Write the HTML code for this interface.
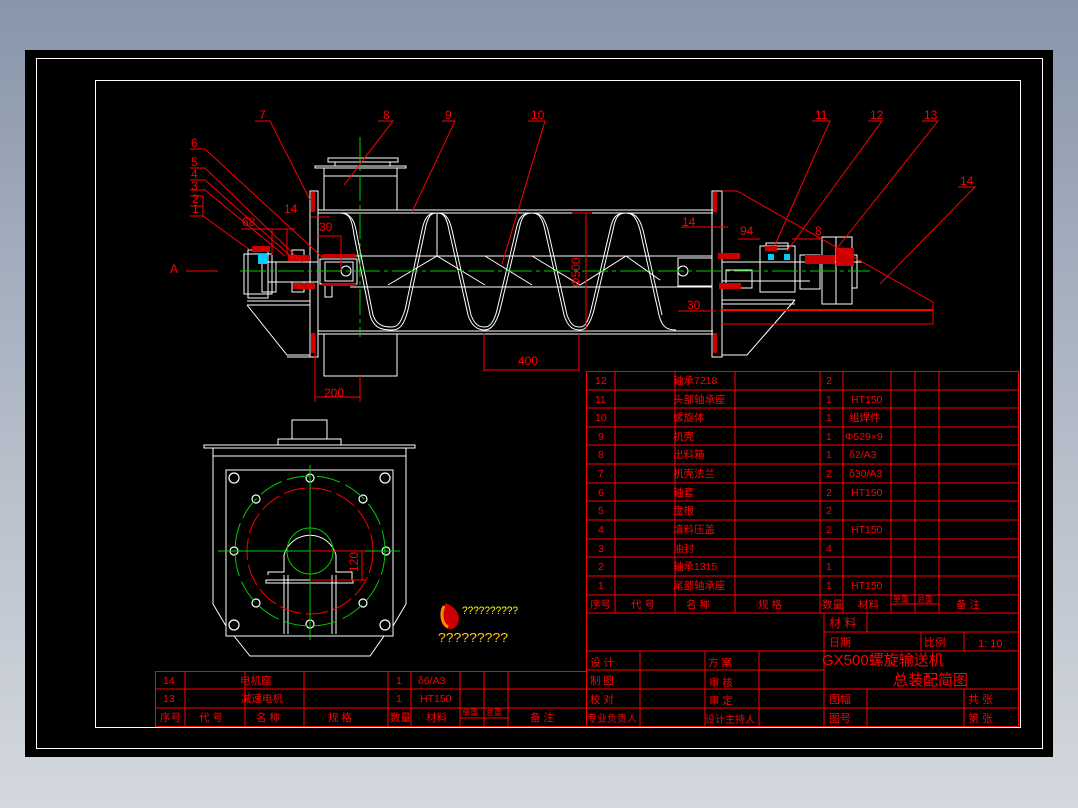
<!DOCTYPE html>
<html><head><meta charset="utf-8"><style>
html,body{margin:0;padding:0;width:1078px;height:808px;overflow:hidden;background:linear-gradient(#8896aa,#b9c0cc 60%,#d4d8de);}
svg{position:absolute;left:0;top:0}
text{font-family:"Liberation Sans","Noto Sans CJK SC",sans-serif;fill:#f00;}
</style></head><body>
<svg width="1078" height="808" viewBox="0 0 1078 808" xmlns="http://www.w3.org/2000/svg">
<rect x="25" y="50" width="1028" height="707" fill="#000"/>
<rect x="36.5" y="58.5" width="1006" height="690" fill="none" stroke="#fff" stroke-width="1"/>
<rect x="95.5" y="80.5" width="925" height="647" fill="none" stroke="#fff" stroke-width="1"/>

<!-- MAIN VIEW -->
<g fill="none" stroke="#fff" stroke-width="1">
 <line x1="318" y1="210" x2="713" y2="210"/><line x1="318" y1="213" x2="713" y2="213"/>
 <line x1="318" y1="331" x2="713" y2="331"/><line x1="318" y1="334" x2="713" y2="334"/>
 <rect x="310" y="191" width="8" height="166"/>
 <rect x="315" y="166" width="91" height="2"/>
 <rect x="324" y="168" width="73" height="42"/>
 <line x1="324" y1="176" x2="397" y2="176"/>
 <rect x="328" y="158" width="70" height="4"/>
 <line x1="335" y1="162" x2="335" y2="166"/><line x1="390" y1="162" x2="390" y2="166"/>
 <rect x="324" y="334" width="73" height="42"/>
 <line x1="350" y1="256" x2="712" y2="256"/><line x1="350" y1="287" x2="712" y2="287"/>
 <line x1="268" y1="262" x2="318" y2="262"/><line x1="268" y1="282" x2="318" y2="282"/>
 <rect x="320" y="259" width="37" height="25"/>
 <rect x="325" y="262" width="28" height="19"/>
 <circle cx="346" cy="271" r="5"/>
 <rect x="244" y="254" width="28" height="40"/>
 <rect x="248" y="250" width="20" height="48"/>
 <rect x="262" y="262" width="14" height="30"/>
 <rect x="292" y="250" width="12" height="10"/>
 <rect x="292" y="282" width="12" height="10"/>
 <line x1="247" y1="301" x2="310" y2="301"/><line x1="247" y1="305" x2="310" y2="305"/>
 <path d="M247 305 L287 355 L310 355"/><line x1="287" y1="357" x2="310" y2="357"/>
 <rect x="325" y="284" width="7" height="13"/>
 <path d="M340 213 C350 213 352 220 354 235 L370 315 C374 330 385 330 392 330 C400 330 404 325 408 310 L425 230 C428 214 432 213 437 213 C442 213 446 214 449 230 L468 315 C472 328 480 330 485 330 C490 330 496 325 500 310 L519 230 C522 214 526 213 532 213 C538 213 542 216 545 230 L564 315 C568 328 574 330 580 330 C585 330 590 325 594 310 L613 230 C616 214 620 213 626 213 C632 213 636 216 640 230 L659 315 C662 328 668 330 676 330"/>
 <path d="M343 213 C352 215 355 222 357 235 L373 315 C377 327 386 327 392 327 C398 327 401 322 405 310 L422 230 C425 215 430 213 437 213 C444 213 449 216 452 230 L471 315 C475 326 480 327 485 327 C490 327 494 322 497 310 L516 230 C519 215 524 213 532 213 C540 213 544 216 548 230 L567 315 C571 326 575 327 580 327 C585 327 588 322 591 310 L610 230 C613 215 618 213 626 213 C634 213 639 216 643 230 L662 315"/>
 <path d="M388 285 L437 256 L485 285 M485 256 L532 285 M532 256 L580 285 L626 256 L660 280"/>
 <line x1="437" y1="213" x2="437" y2="256"/>
 <rect x="712" y="191" width="10" height="166"/>
 <rect x="678" y="258" width="34" height="28"/>
 <circle cx="683" cy="271" r="5"/>
 <line x1="722" y1="262" x2="862" y2="262"/><line x1="722" y1="281" x2="810" y2="281"/>
 <rect x="760" y="246" width="35" height="46"/>
 <rect x="766" y="243" width="22" height="6"/>
 <rect x="800" y="255" width="20" height="34"/>
 <rect x="822" y="237" width="30" height="67"/>
 <rect x="852" y="255" width="5" height="33"/>
 <line x1="836" y1="237" x2="836" y2="304"/>
 <line x1="722" y1="300" x2="795" y2="300"/><line x1="722" y1="304" x2="795" y2="304"/>
 <path d="M795 300 L747 355 L722 355"/>
 <rect x="726" y="270" width="26" height="18"/>
</g>
<g fill="#c00">
 <rect x="311" y="192" width="4" height="20"/><rect x="311" y="333" width="4" height="20"/>
 <rect x="713" y="192" width="4" height="20"/><rect x="713" y="333" width="4" height="20"/>
 <rect x="288" y="255" width="22" height="6"/><rect x="293" y="283" width="22" height="6"/>
 <rect x="252" y="246" width="18" height="6"/>
 <rect x="322" y="254" width="34" height="4"/><rect x="322" y="283" width="34" height="3"/>
 <rect x="805" y="255" width="30" height="9"/><rect x="836" y="248" width="18" height="18"/>
 <rect x="765" y="246" width="12" height="5"/>
 <rect x="718" y="253" width="22" height="6"/><rect x="719" y="283" width="22" height="6"/>
</g>
<g fill="#0cf"><rect x="258" y="254" width="9" height="10"/><rect x="768" y="254" width="6" height="6"/><rect x="784" y="254" width="6" height="6"/></g>
<g stroke="#0c0" stroke-width="1" stroke-dasharray="26 4 4 4" fill="none">
 <line x1="240" y1="271" x2="870" y2="271"/>
 <line x1="360" y1="137" x2="360" y2="337"/>
</g>
<g stroke="#f00" stroke-width="1" fill="none">
 <line x1="315" y1="334" x2="315" y2="402"/><line x1="360" y1="376" x2="360" y2="402"/><line x1="315" y1="397" x2="360" y2="397"/>
 <line x1="484" y1="333" x2="484" y2="372"/><line x1="579" y1="333" x2="579" y2="372"/><line x1="484" y1="370" x2="579" y2="370"/>
 <line x1="586" y1="213" x2="586" y2="331"/><line x1="572" y1="213" x2="592" y2="213"/>
 <line x1="311" y1="217" x2="330" y2="217"/><line x1="318" y1="236" x2="341" y2="236"/><line x1="341" y1="236" x2="341" y2="270"/>
 <line x1="241" y1="229" x2="295" y2="229"/><line x1="272" y1="229" x2="272" y2="255"/><line x1="287" y1="229" x2="287" y2="255"/>
 <line x1="186" y1="271" x2="218" y2="271"/>
 <path d="M255 121 L270 121 L310 200"/><path d="M378 121 L393 121 L344 185"/>
 <path d="M442 121 L455 121 L412 212"/><path d="M528 121 L545 121 L502 264"/>
 <path d="M190 149 L205 149 L322 257"/><path d="M190 168 L205 168 L302 262"/>
 <path d="M190 180 L205 180 L294 259"/><path d="M190 190 L205 190 L285 256"/>
 <path d="M190 196 L203 196 L203 216 L190 216 M190 206 L203 206"/><path d="M203 216 L250 250"/>
 <path d="M812 121 L830 121 L775 245"/><path d="M868 121 L882 121 L787 251"/><path d="M922 121 L938 121 L838 247"/>
 <path d="M958 187 L975 187 L880 284"/>
 <path d="M722 191 L737 191 L933 302 L933 324"/>
 <line x1="722" y1="310" x2="933" y2="310" stroke-width="2"/>
 <line x1="722" y1="324" x2="933" y2="324"/>
 <line x1="681" y1="227" x2="728" y2="227"/><line x1="678" y1="311" x2="716" y2="311"/>
 <line x1="738" y1="239" x2="760" y2="239"/><line x1="792" y1="239" x2="822" y2="239"/>
</g>
<g font-size="12">
 <text x="259" y="119">7</text><text x="383" y="119">8</text><text x="445" y="119">9</text><text x="531" y="119">10</text>
 <text x="191" y="147">6</text><text x="191" y="166">5</text><text x="191" y="178">4</text><text x="191" y="190">3</text><text x="192" y="203">2</text><text x="192" y="213">1</text>
 <text x="242" y="226">68</text><text x="284" y="213">14</text><text x="319" y="231">30</text>
 <text x="170" y="273">A</text>
 <text x="324" y="397">200</text><text x="518" y="365">400</text>
 <text x="815" y="119">11</text><text x="870" y="119">12</text><text x="924" y="119">13</text><text x="960" y="185">14</text>
 <text x="682" y="226">14</text><text x="740" y="235">94</text><text x="815" y="235">8</text><text x="687" y="309">30</text>
 <text x="0" y="0" transform="translate(580 287) rotate(-90)">Φ500</text>
</g>

<!-- SIDE VIEW -->
<g fill="none" stroke="#fff" stroke-width="1">
 <rect x="204" y="445" width="211" height="3"/>
 <rect x="213" y="448" width="193" height="8"/>
 <rect x="278" y="439" width="63" height="6"/><rect x="292" y="420" width="35" height="19"/>
 <path d="M213 456 L213 604 L226 626 M406 456 L406 604 L393 626"/>
 <rect x="226" y="470" width="167" height="166"/>
 <path d="M234 636 L250 656 L370 656 L384 636"/>
 <path d="M284 575 L284 634 M288 575 L288 634 M332 575 L332 634 M336 575 L336 634"/>
 <rect x="266" y="580" width="87" height="3"/>
 <path d="M268 575 L268 572 L284 572 L284 555 A27 27 0 0 1 336 555 L336 572 L352 572 L352 580"/>
 <g stroke-width="1.2">
 <circle cx="234" cy="478" r="5"/><circle cx="385" cy="478" r="5"/><circle cx="234" cy="625" r="5"/><circle cx="385" cy="625" r="5"/>
 <circle cx="310" cy="478" r="4"/><circle cx="310" cy="624" r="4"/><circle cx="234" cy="551" r="4"/><circle cx="386" cy="551" r="4"/>
 <circle cx="256" cy="499" r="4"/><circle cx="363" cy="499" r="4"/><circle cx="256" cy="603" r="4"/><circle cx="363" cy="603" r="4"/>
 </g>
</g>
<circle cx="310" cy="551" r="75" fill="none" stroke="#0c0" stroke-dasharray="24 6"/>
<circle cx="310" cy="551" r="63" fill="none" stroke="#f00" stroke-dasharray="22 5"/>
<circle cx="310" cy="551" r="23" fill="none" stroke="#0c0"/>
<line x1="218" y1="551" x2="400" y2="551" stroke="#0c0"/>
<line x1="310" y1="465" x2="310" y2="640" stroke="#0c0"/>
<g stroke="#f00" fill="none"><line x1="310" y1="551" x2="365" y2="551"/><line x1="310" y1="580" x2="365" y2="580"/><line x1="362" y1="551" x2="362" y2="580"/></g>
<text x="0" y="0" font-size="12" transform="translate(358 572) rotate(-90)">120</text>

<path d="M446 603 C440 610 438 622 446 628 C452 631 458 628 459 618 C458 610 452 606 446 603 Z" fill="#c00"/>
<path d="M444 606 C440 614 442 624 448 627" stroke="#f80" stroke-width="3" fill="none"/>
<text x="462" y="614" font-size="11" style="fill:#ff0" textLength="56" lengthAdjust="spacingAndGlyphs">??????????</text>
<text x="438" y="642" font-size="13" style="fill:#fc0" textLength="70" lengthAdjust="spacingAndGlyphs">?????????</text>

<!-- RIGHT PARTS TABLE -->
<g stroke="#f00" stroke-width="1" fill="none">
 <rect x="586.5" y="371.5" width="432" height="355"/>
 <path d="M586 390H1018M586 408H1018M586 427H1018M586 445H1018M586 464H1018M586 483H1018M586 501H1018M586 520H1018M586 539H1018M586 557H1018M586 576H1018M586 595H1018M586 613H1018"/>
 <path d="M615 371V613M675 371V613M735 371V613M820 371V613M843 371V613M891 371V613M915 371V613M939 371V613"/>
 <path d="M891 604H939"/>
 <path d="M824 613V727M824 632H1018M824 651H1018M586 651H1018M921 632V651M964 632V651"/>
 <path d="M586 670H824M586 689H1018M586 708H1018M640 651V727M705 651V727M759 651V727M867 689V727M964 689V727M867 613V632"/>
</g>
<g font-size="10.5">
 <text x="595" y="384">12</text><text x="595" y="403">11</text><text x="595" y="421">10</text><text x="598" y="440">9</text><text x="598" y="458">8</text><text x="598" y="477">7</text><text x="598" y="496">6</text><text x="598" y="514">5</text><text x="598" y="533">4</text><text x="598" y="552">3</text><text x="598" y="570">2</text><text x="598" y="589">1</text>
 <text x="673" y="384">轴承7218</text><text x="673" y="403">头部轴承座</text><text x="673" y="421">螺旋体</text><text x="673" y="440">机壳</text><text x="673" y="458">出料箱</text><text x="673" y="477">机壳法兰</text><text x="673" y="496">轴套</text><text x="673" y="514">盘根</text><text x="673" y="533">填料压盖</text><text x="673" y="552">油封</text><text x="673" y="570">轴承1315</text><text x="673" y="589">尾部轴承座</text>
 <text x="826" y="384">2</text><text x="826" y="403">1</text><text x="826" y="421">1</text><text x="826" y="440">1</text><text x="826" y="458">1</text><text x="826" y="477">2</text><text x="826" y="496">2</text><text x="826" y="514">2</text><text x="826" y="533">2</text><text x="826" y="552">4</text><text x="826" y="570">1</text><text x="826" y="589">1</text>
 <text x="851" y="403">HT150</text><text x="849" y="421">组焊件</text><text x="845" y="440">Φ529×9</text><text x="849" y="458">δ2/A3</text><text x="849" y="477">δ30/A3</text><text x="851" y="496">HT150</text><text x="851" y="533">HT150</text><text x="851" y="589">HT150</text>
 <text x="590" y="608">序号</text><text x="631" y="608">代 号</text><text x="686" y="608">名 称</text><text x="758" y="608">规 格</text><text x="822" y="608">数量</text><text x="858" y="608">材料</text><text x="893" y="602" font-size="8">单重</text><text x="917" y="602" font-size="8">总重</text><text x="956" y="608">备 注</text>
 <text x="829" y="627" font-size="12">材 料</text><text x="829" y="646" font-size="11">日期</text><text x="924" y="646" font-size="11">比例</text><text x="978" y="647" font-size="11">1: 10</text>
 <text x="590" y="666">设 计</text><text x="590" y="684">制 图</text><text x="590" y="703">校 对</text><text x="587" y="722" font-size="10">专业负责人</text>
 <text x="708" y="666">方 案</text><text x="709" y="686">审 核</text><text x="709" y="704">审 定</text><text x="705" y="723" font-size="10">设计主持人</text>
 <text x="829" y="703" font-size="11">图幅</text><text x="829" y="722" font-size="11">图号</text><text x="968" y="703" font-size="11">共 张</text><text x="968" y="722" font-size="11">第 张</text>
 <text x="822" y="665" font-size="15">GX500螺旋输送机</text><text x="893" y="685" font-size="15">总装配简图</text>
</g>

<!-- LEFT BOTTOM TABLE -->
<g stroke="#f00" stroke-width="1" fill="none">
 <rect x="155.5" y="671.5" width="431" height="55"/>
 <path d="M155 689H586M155 708H586M185 671V727M245 671V727M304 671V727M388 671V727M411 671V727M460 671V727M484 671V727M508 671V727M460 718H508"/>
</g>
<g font-size="10.5">
 <text x="163" y="684">14</text><text x="163" y="702">13</text>
 <text x="240" y="684">电机座</text><text x="241" y="702">减速电机</text>
 <text x="396" y="684">1</text><text x="396" y="702">1</text>
 <text x="418" y="684">δ6/A3</text><text x="420" y="702">HT150</text>
 <text x="160" y="721">序号</text><text x="199" y="721">代 号</text><text x="256" y="721">名 称</text><text x="328" y="721">规 格</text><text x="390" y="721">数量</text><text x="426" y="721">材料</text><text x="462" y="715" font-size="8">单重</text><text x="486" y="715" font-size="8">总重</text><text x="530" y="721">备 注</text>
</g>
</svg>
</body></html>
